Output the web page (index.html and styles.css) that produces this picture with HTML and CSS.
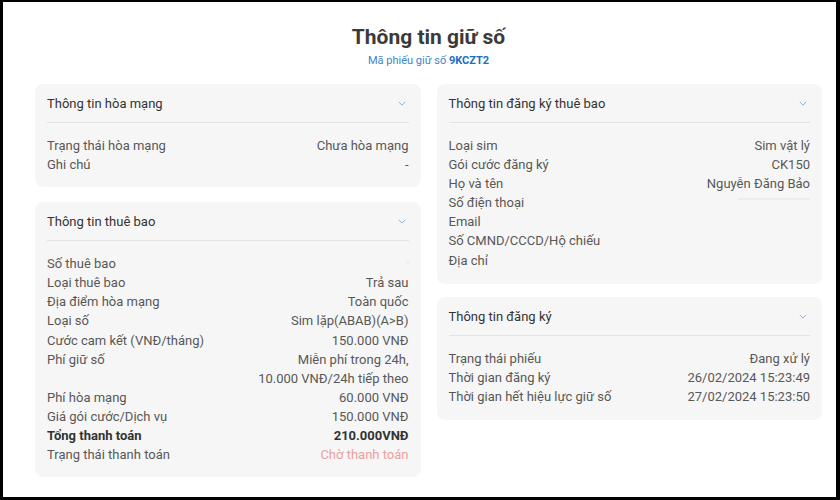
FILE: index.html
```html
<!DOCTYPE html>
<html>
<head>
  <meta charset="utf-8">
  <link rel="stylesheet" href="styles.css">
</head>
<body>
  <div class="screen">
    <h1 class="title">Thông tin giữ số</h1>
    <div class="ticket">Mã phiếu giữ số <b>9KCZT2</b></div>

    <div class="columns">
      <div class="column left">
        <div class="card">
          <div class="card-head">
            <span>Thông tin hòa mạng</span>
            <svg class="chevron" viewBox="0 0 10 6"><path d="M1 1l4 4 4-4"/></svg>
          </div>
          <div class="rows">
            <div class="row"><span>Trạng thái hòa mạng</span><span>Chưa hòa mạng</span></div>
            <div class="row"><span>Ghi chú</span><span>-</span></div>
          </div>
        </div>

        <div class="card">
          <div class="card-head">
            <span>Thông tin thuê bao</span>
            <svg class="chevron" viewBox="0 0 10 6"><path d="M1 1l4 4 4-4"/></svg>
          </div>
          <div class="rows">
            <div class="row"><span>Số thuê bao</span><span class="hidden-value short"></span></div>
            <div class="row"><span>Loại thuê bao</span><span>Trả sau</span></div>
            <div class="row"><span>Địa điểm hòa mạng</span><span>Toàn quốc</span></div>
            <div class="row"><span>Loại số</span><span>Sim lặp(ABAB)(A&gt;B)</span></div>
            <div class="row"><span>Cước cam kết (VNĐ/tháng)</span><span>150.000 VNĐ</span></div>
            <div class="row"><span>Phí giữ số</span><span class="multi">Miễn phí trong 24h,<br>10.000 VNĐ/24h tiếp theo</span></div>
            <div class="row"><span>Phí hòa mạng</span><span>60.000 VNĐ</span></div>
            <div class="row"><span>Giá gói cước/Dịch vụ</span><span>150.000 VNĐ</span></div>
            <div class="row total"><span>Tổng thanh toán</span><span>210.000VNĐ</span></div>
            <div class="row"><span>Trạng thái thanh toán</span><span class="pending">Chờ thanh toán</span></div>
          </div>
        </div>
      </div>

      <div class="column right">
        <div class="card">
          <div class="card-head">
            <span>Thông tin đăng ký thuê bao</span>
            <svg class="chevron" viewBox="0 0 10 6"><path d="M1 1l4 4 4-4"/></svg>
          </div>
          <div class="rows">
            <div class="row"><span>Loại sim</span><span>Sim vật lý</span></div>
            <div class="row"><span>Gói cước đăng ký</span><span>CK150</span></div>
            <div class="row"><span>Họ và tên</span><span>Nguyễn Đăng Bảo</span></div>
            <div class="row"><span>Số điện thoại</span><span class="hidden-value"></span></div>
            <div class="row"><span>Email</span><span></span></div>
            <div class="row"><span>Số CMND/CCCD/Hộ chiếu</span><span></span></div>
            <div class="row"><span>Địa chỉ</span><span></span></div>
          </div>
        </div>

        <div class="card">
          <div class="card-head">
            <span>Thông tin đăng ký</span>
            <svg class="chevron" viewBox="0 0 10 6"><path d="M1 1l4 4 4-4"/></svg>
          </div>
          <div class="rows">
            <div class="row"><span>Trạng thái phiếu</span><span>Đang xử lý</span></div>
            <div class="row"><span>Thời gian đăng ký</span><span>26/02/2024 15:23:49</span></div>
            <div class="row"><span>Thời gian hết hiệu lực giữ số</span><span>27/02/2024 15:23:50</span></div>
          </div>
        </div>
      </div>
    </div>
  </div>
</body>
</html>
```

FILE: styles.css
```css
body {
  margin: 0;
  padding: 2px 4px 3px 3px;
  background: #000;
  font-family: Roboto, "Noto Sans", sans-serif;
}

.screen {
  height: 495px;
  box-sizing: border-box;
  background: #fff;
  padding: 21px 14px 0 32px;
  overflow: hidden;
}

.title {
  margin: 0;
  text-align: center;
  font-size: 21px;
  line-height: 28px;
  font-weight: 700;
  color: #3a3a3a;
}

.ticket {
  margin-top: 2px;
  text-align: center;
  font-size: 11px;
  line-height: 16px;
  color: #3f83c6;
}

.ticket b {
  color: #1c6fc2;
}

.columns {
  display: flex;
  gap: 16px;
  margin-top: 15px;
}

.column {
  flex: 1;
  display: flex;
  flex-direction: column;
}

.column.left {
  gap: 15px;
}

.column.right {
  gap: 13px;
}

.card {
  background: #f6f6f6;
  border-radius: 8px;
  padding: 10px 12px 13px;
}

.right .card {
  padding-bottom: 14px;
}

.card-head {
  display: flex;
  justify-content: space-between;
  align-items: center;
  font-size: 13px;
  line-height: 19px;
  color: #333;
  padding-bottom: 9px;
  border-bottom: 1px solid #e3e3e3;
}

.chevron {
  width: 8px;
  height: 5px;
  margin-right: 3px;
  fill: none;
  stroke: #7eaad4;
  stroke-width: 1.1;
}

.rows {
  margin-top: 13px;
}

.row {
  display: flex;
  justify-content: space-between;
  font-size: 13px;
  line-height: 19.1px;
  color: #585858;
}

.multi {
  text-align: right;
}

.total {
  font-weight: 700;
  color: #333;
}

.pending {
  color: #eaa0a0;
}

.hidden-value {
  width: 72px;
  height: 2px;
  margin-top: 5px;
  background: #ececec;
}

.hidden-value.short {
  width: 2px;
  margin-top: 8px;
}
```
